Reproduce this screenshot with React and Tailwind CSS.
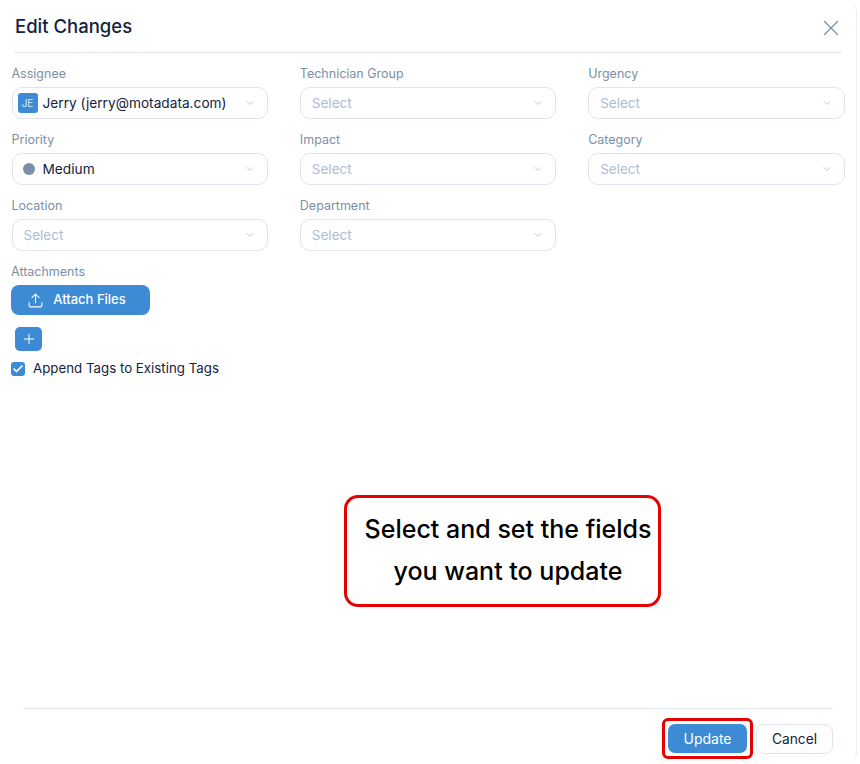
import React from 'react';
import { ChevronDown, Plus, Upload, X, Check } from 'lucide-react';

const fields = [
  { label: 'Assignee', value: 'Jerry (jerry@motadata.com)', kind: 'avatar' },
  { label: 'Technician Group' },
  { label: 'Urgency' },
  { label: 'Priority', value: 'Medium', kind: 'dot' },
  { label: 'Impact' },
  { label: 'Category' },
  { label: 'Location' },
  { label: 'Department' },
];

const Field = ({ label, value, kind }) => (
  <div>
    <div className="h-[24px] pt-[1px] text-[12.5px] leading-[20px] text-[#7b8fa5]">{label}</div>
    <div className="flex h-[32px] items-center rounded-[10px] border border-[#dfe5ee] bg-white pr-[11px]">
      {kind === 'avatar' && (
        <span className="ml-[5px] mr-[5px] flex h-[20px] w-[20px] items-center justify-center rounded-[3px] bg-[#3d8bd4] text-[10px] text-[#d8e8f7]">
          JE
        </span>
      )}
      {kind === 'dot' && <span className="ml-[10px] mr-[8px] h-[12px] w-[12px] rounded-full bg-[#7b8fa8]" />}
      {value ? (
        <span className="flex-1 truncate text-[13.7px] text-[#14233c]">{value}</span>
      ) : (
        <span className="flex-1 pl-[11px] text-[13.5px] text-[#a9bdd4]">Select</span>
      )}
      <ChevronDown size={12} strokeWidth={1.25} className="text-[#8fa3ba]" />
    </div>
  </div>
);

export default function App() {
  return (
    <div className="h-[764px] w-[860px] overflow-hidden bg-white font-['Inter',sans-serif]">
      <div className="relative flex h-[764px] w-[857px] flex-col rounded-r-[12px] border-r border-[#eceff3] bg-white">
        <div className="mx-[14px] flex h-[53px] items-start justify-between border-b border-[#dfe5ee] pt-[14px]">
          <h1 className="ml-[1px] text-[18.5px] leading-[24px] font-medium text-[#14233c]">Edit Changes</h1>
          <X size={26} strokeWidth={1.2} className="mt-[1px] -mr-[2px] text-[#7b8fa5]" />
        </div>

        <div className="mt-[10px] grid grid-cols-3 gap-x-[32px] gap-y-[10px] px-[11.5px]">
          {fields.map((f) => (
            <Field key={f.label} {...f} />
          ))}
        </div>

        <div className="pl-[11px]">
          <div className="mt-[10px] h-[24px] pt-[1px] text-[12.5px] leading-[20px] text-[#7b8fa5]">Attachments</div>
          <button className="flex h-[30px] w-[139px] items-center justify-center gap-[9px] rounded-[8px] bg-[#3d8bd4] pr-[8px] text-[13px] font-medium text-white">
            <Upload size={17} strokeWidth={1.5} />
            Attach Files
          </button>
          <button className="mt-[12px] ml-[4px] flex h-[24px] w-[27px] items-center justify-center rounded-[5px] bg-[#3d8bd4] text-white">
            <Plus size={16} strokeWidth={1.5} />
          </button>
          <label className="mt-[8px] flex h-[20px] items-center gap-[8px] text-[13.3px] text-[#14233c]">
            <span className="flex h-[14px] w-[14px] items-center justify-center rounded-[3px] bg-[#3d8bd4] text-white">
              <Check size={12} strokeWidth={3.5} />
            </span>
            Append Tags to Existing Tags
          </label>
        </div>

        <div className="absolute top-[495px] left-[344px] flex h-[112px] w-[317px] flex-col items-center justify-center rounded-[14px] border-[3px] border-[#e60000] bg-white pb-[2px] pl-[11px] text-[25px] leading-[42px] font-medium text-black">
          <span>Select and set the fields</span>
          <span>you want to update</span>
        </div>

        <div className="mt-auto mr-[23px] ml-[23px] flex h-[56px] items-start justify-end gap-[3px] border-t border-[#dfe5ee] pt-[9px]">
          <div className="rounded-[6px] border-[3px] border-[#e60000] p-[3px]">
            <button className="flex h-[29px] w-[79px] items-center justify-center rounded-[7px] bg-[#3d8bd4] text-[14px] text-white">
              Update
            </button>
          </div>
          <button className="mt-[6px] flex h-[30px] w-[77px] items-center justify-center rounded-[8px] border border-[#dfe5ee] bg-white text-[13.8px] text-[#14233c]">
            Cancel
          </button>
        </div>
      </div>
    </div>
  );
}
